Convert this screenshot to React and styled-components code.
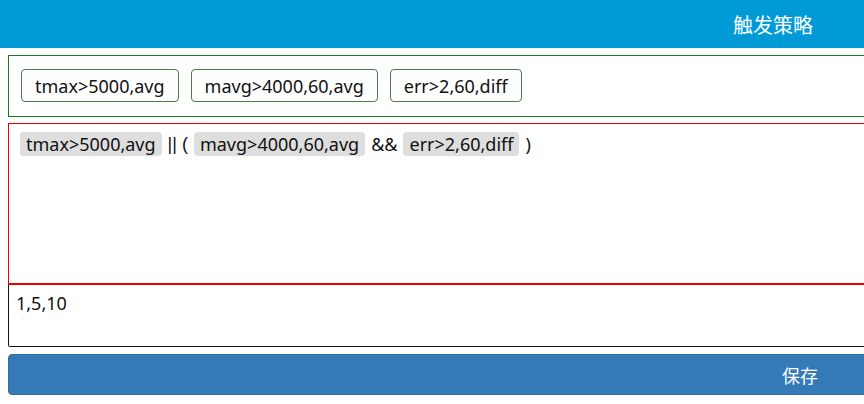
import styled, { createGlobalStyle } from "styled-components";

const GlobalStyle = createGlobalStyle`
  body {
    margin: 0;
    font-family: "Noto Sans", "Noto Sans CJK SC", sans-serif;
    color: #111;
    overflow: hidden;
  }
`

const Page = styled.div`
  width: 1600px;
`
const Header = styled.div`
  width: 1546px;
  height: 48px;
  background-color: #009bd6;
  color: #fff;
  font-family: "Noto Sans CJK SC", sans-serif;
  font-size: 20px;
  display: flex;
  align-items: center;
  justify-content: center;
`
const Body = styled.div`
  padding: 0 8px;
  width: 1584px;
`
const TagBox = styled.div`
  margin-top: 7px;
  height: 62px;
  box-sizing: border-box;
  border: 1px solid #1c7a1c;
  padding: 13px 12px;
  display: flex;
  gap: 12px;
`
const Tag = styled.div`
  height: 33px;
  box-sizing: border-box;
  border: 1px solid #4a7d4a;
  border-radius: 4px;
  padding: 0 13px;
  display: flex;
  align-items: center;
  font-size: 18px;
`
const ExprBox = styled.div`
  margin-top: 6px;
  height: 162px;
  box-sizing: border-box;
  border: 1px solid #e00;
  border-bottom-width: 2px;
  padding: 8px 11px;
  display: flex;
  align-items: flex-start;
  gap: 6px;
  font-size: 18px;
`
const Chip = styled.span`
  height: 24px;
  display: inline-flex;
  align-items: center;
  padding: 0 6px;
  border-radius: 4px;
  background-color: #dedede;
`
const Op = styled.span`
  height: 24px;
  display: inline-flex;
  align-items: center;
  font-family: ${(props) => props.font || 'inherit'};
`
const Levels = styled.div`
  height: 62px;
  box-sizing: border-box;
  border: 1px solid #111;
  border-top: none;
  border-radius: 0 0 2px 2px;
  padding: 6px 7px;
  font-size: 18px;
`
const SaveBtn = styled.button`
  display: flex;
  align-items: center;
  justify-content: center;
  margin-top: 7px;
  width: 100%;
  height: 41px;
  border: 1px solid #2e6da4;
  border-radius: 4px;
  background-color: #337ab7;
  color: #fff;
  font-family: "Noto Sans CJK SC", sans-serif;
  font-size: 18px;
`

const tags = ["tmax>5000,avg", "mavg>4000,60,avg", "err>2,60,diff"]

export default function App() {
  return (
    <Page>
      <GlobalStyle />
      <Header>触发策略</Header>
      <Body>
        <TagBox>
          {tags.map((t) => <Tag key={t}>{t}</Tag>)}
        </TagBox>
        <ExprBox>
          <Chip>{tags[0]}</Chip>
          <Op font='"Liberation Sans", sans-serif'>|| (</Op>
          <Chip>{tags[1]}</Chip>
          <Op>&amp;&amp;</Op>
          <Chip>{tags[2]}</Chip>
          <Op>)</Op>
        </ExprBox>
        <Levels>1,5,10</Levels>
        <SaveBtn>保存</SaveBtn>
      </Body>
    </Page>
  )
}
